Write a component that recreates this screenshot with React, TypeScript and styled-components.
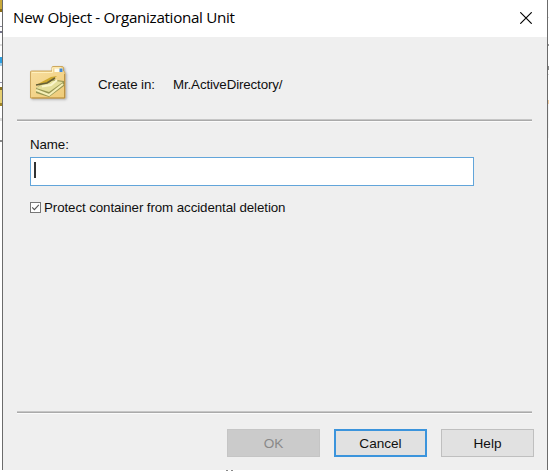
import React from "react";
import styled, { createGlobalStyle } from "styled-components";

const GlobalStyle = createGlobalStyle`
  * { box-sizing: border-box; }
  body { margin: 0; background: #fff; overflow: hidden; }
`;

const Desktop = styled.div`
  display: grid;
  grid-template-columns: 2px 546px 1px;
  grid-template-rows: 470px 1px;
  width: 549px;
  height: 471px;
  background: #fff;
`;

const LeftBackdrop = styled.div`
  background: linear-gradient(
    #c9a93a 0 9px, #8c6d14 9px 12px, #fff 12px 26px, #85859a 26px 27px,
    #fff 27px 31px, #74748a 31px 33px, #fff 33px 44px, #ddd 44px 46px,
    #fff 46px 57px, #2c9fe2 57px 63px, #9ccbe8 63px 66px, #fff 66px 82px,
    #9292a8 82px 83px, #fff 83px 87px, #8c7420 87px 90px, #e6cf72 90px 103px,
    #a08525 103px 106px, #fff 106px 118px, #ddd 118px 121px, #fff 121px 140px,
    #888 140px 142px, #fff 142px
  );
`;

const RightBackdrop = styled.div`
  background: linear-gradient(
    #fff 0 17px, #ddd 17px 18px, #fff 18px 44px, #999 44px 46px,
    #fff 46px 66px, #888 66px 70px, #fff 70px 74px, #ddd 74px 75px,
    #fff 75px 100px, #f4cfa4 100px 104px, #f4f4f4 104px 138px, #fff 138px
  );
`;

const BottomBackdrop = styled.div`
  grid-column: 1 / -1;
  background: linear-gradient(90deg, #fff 226px, #888 226px 228px, #fff 228px 231px, #888 231px 233px, #fff 233px);
`;

const Dialog = styled.main`
  display: flex;
  flex-direction: column;
  border: solid #6b6b6b;
  border-width: 0 1px;
  background: #efefef;
  color: #101010;
  font: 13.33px/16px "Liberation Sans", Arial, sans-serif;
  letter-spacing: -0.09px;
`;

const TitleBar = styled.header`
  display: flex;
  flex: 0 0 37px;
  align-items: flex-start;
  justify-content: space-between;
  padding: 6px 15px 0 10px;
  background: #fff;
`;

const Title = styled.h1`
  margin: 0;
  color: #000;
  font: 400 15.2px/23px "Open Sans", "Segoe UI", sans-serif;
  letter-spacing: -0.31px;
  white-space: nowrap;
`;

const CloseButton = styled.button`
  display: flex;
  margin: 6px 0 0;
  padding: 0;
  border: 0;
  background: none;
`;

const Location = styled.section`
  display: flex;
  flex: 0 0 82px;
  padding: 26px 0 0 25px;
`;

const LocationLabel = styled.span`
  width: 75px;
  margin: 14px 0 0 26px;
`;

const LocationPath = styled.span`
  margin-top: 14px;
  letter-spacing: -0.13px;
`;

const Divider = styled.div`
  flex: 0 0 3px;
  width: 515px;
  margin-left: 14px;
  border-top: 1px solid #c6c6c6;
  border-bottom: 1px solid #fbfbfb;
  background: #aaa;
`;

const Form = styled.form`
  display: flex;
  flex: 0 0 289px;
  flex-direction: column;
  align-items: flex-start;
  padding: 15px 0 0 27px;
`;

const FieldLabel = styled.label`
  height: 20px;
`;

const NameField = styled.div`
  width: 444px;
  height: 29px;
  padding: 4px 3px;
  border: 1px solid #62a5da;
  background: #fff;
`;

const Caret = styled.span`
  display: block;
  width: 1.5px;
  height: 16px;
  background: #333;
`;

const CheckRow = styled.div`
  display: flex;
  align-items: flex-start;
  gap: 3px;
  margin-top: 14px;
  white-space: nowrap;
`;

const CheckBox = styled.span`
  display: flex;
  width: 11px;
  height: 11px;
  margin-top: 2px;
  border: 1px solid #777;
  background: #fff;
`;

const Buttons = styled.footer`
  display: flex;
  gap: 14px;
  padding: 15px 0 0 224px;
`;

const DialogButton = styled.button<{ $tone?: "disabled" | "focused" }>`
  width: 93px;
  height: 28px;
  padding: 1px 0 0;
  border: ${({ $tone }) => ($tone === "focused" ? "2px solid #3b94dc" : "1px solid #bfbfbf")};
  ${({ $tone }) => $tone === "disabled" && "border-color: #c5c5c5;"}
  background: ${({ $tone }) => ($tone === "disabled" ? "#cbcbcb" : "#e1e1e1")};
  color: ${({ $tone }) => ($tone === "disabled" ? "#898989" : "#101010")};
  font: 13.6px/16px "Liberation Sans", Arial, sans-serif;
`;

const FolderIcon = () => (
  <svg width="44" height="44" viewBox="0 0 44 44" aria-hidden="true">
    <defs>
      <linearGradient id="folder" x1="0" y1="0" x2=".8" y2="1">
        <stop stopColor="#f9dfa1" />
        <stop offset="1" stopColor="#efcd7c" />
      </linearGradient>
      <filter id="shadow" x="-20%" y="-20%" width="150%" height="150%">
        <feDropShadow dx="1.2" dy="1.2" stdDeviation="1" floodOpacity=".3" />
      </filter>
      <filter id="soft"><feGaussianBlur stdDeviation=".45" /></filter>
    </defs>
    <path filter="url(#shadow)" d="M2.5 9q0-1 1-1H24V4.5q0-1 1-1h9q1.5 0 1.5 1.5v3q1.5.5 1.5 2v25H2.5z" fill="url(#folder)" stroke="#c49a47" strokeWidth=".8" />
    <path d="M4 9.5h20.5V4.8H33" fill="none" stroke="#fff0bd" />
    <path d="M26.5 5.5h8V9h-8z" fill="#fffdf0" />
    <path d="M31.5 5.5h3V9h-3z" fill="#4288d6" />
    <g filter="url(#soft)">
      <path d="m8 25 13-9 15 2v5l-15 11-13-4z" fill="#989653" />
      <path d="m8 25 13-8 14 2-14 10z" fill="#e5df9b" />
      <path d="m8 27 13 5 14-11" fill="none" stroke="#f5efb6" strokeWidth="2" />
      <path d="m8 22 15-8 6-1-8 7-11 2z" fill="#cda82d" />
      <path d="m8 22 11-2 8-5" fill="none" stroke="#656038" strokeWidth="1.6" />
      <path d="m14 23.5 9-1.5 6-5" fill="none" stroke="#faf5cc" strokeWidth="2" />
    </g>
    <path d="M3.5 35h33V11" fill="none" stroke="#b58836" strokeWidth=".8" />
  </svg>
);

export default function App() {
  return (
    <>
      <GlobalStyle />
      <Desktop>
        <LeftBackdrop />
        <Dialog>
          <TitleBar>
            <Title>New Object - Organizational Unit</Title>
            <CloseButton aria-label="Close">
              <svg width="12" height="12" viewBox="0 0 12 12">
                <path d="m.3.3 11.4 11.4M11.7.3.3 11.7" stroke="#000" strokeWidth="1.15" />
              </svg>
            </CloseButton>
          </TitleBar>
          <Location>
            <FolderIcon />
            <LocationLabel>Create in:</LocationLabel>
            <LocationPath>Mr.ActiveDirectory/</LocationPath>
          </Location>
          <Divider />
          <Form>
            <FieldLabel>Name:</FieldLabel>
            <NameField role="textbox" aria-label="Name"><Caret /></NameField>
            <CheckRow>
              <CheckBox role="checkbox" aria-checked="true" aria-label="Protect container">
                <svg width="9" height="9" viewBox="0 0 9 9">
                  <path d="m1.2 4.3 2.2 2.3 4.4-4.7" fill="none" stroke="#555" strokeWidth="1.1" />
                </svg>
              </CheckBox>
              <span>Protect container from accidental deletion</span>
            </CheckRow>
          </Form>
          <Divider />
          <Buttons>
            <DialogButton $tone="disabled" disabled>OK</DialogButton>
            <DialogButton $tone="focused">Cancel</DialogButton>
            <DialogButton>Help</DialogButton>
          </Buttons>
        </Dialog>
        <RightBackdrop />
        <BottomBackdrop />
      </Desktop>
    </>
  );
}
